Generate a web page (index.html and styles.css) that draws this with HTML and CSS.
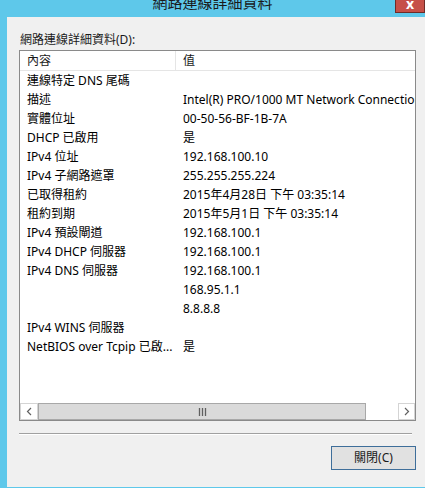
FILE: index.html
```html
<!DOCTYPE html>
<html lang="zh-Hant">
<head>
<meta charset="utf-8">
<link rel="stylesheet" href="styles.css">
</head>
<body>
<div class="window">
  <div class="titlebar">
    <div class="title">網路連線詳細資料</div>
    <div class="close">x</div>
  </div>
  <div class="content">
    <div class="label">網路連線詳細資料(D):</div>
    <div class="listbox">
      <div class="view">
        <div class="header">
          <div class="c1 h">內容</div>
          <div class="c2 h">值</div>
        </div>
        <div class="row"><div class="c1">連線特定 DNS 尾碼</div><div class="c2"></div></div>
        <div class="row"><div class="c1">描述</div><div class="c2">Intel(R) PRO/1000 MT Network Connection</div></div>
        <div class="row"><div class="c1">實體位址</div><div class="c2">00-50-56-BF-1B-7A</div></div>
        <div class="row"><div class="c1">DHCP 已啟用</div><div class="c2">是</div></div>
        <div class="row"><div class="c1">IPv4 位址</div><div class="c2">192.168.100.10</div></div>
        <div class="row"><div class="c1">IPv4 子網路遮罩</div><div class="c2">255.255.255.224</div></div>
        <div class="row"><div class="c1">已取得租約</div><div class="c2">2015年4月28日 下午 03:35:14</div></div>
        <div class="row"><div class="c1">租約到期</div><div class="c2">2015年5月1日 下午 03:35:14</div></div>
        <div class="row"><div class="c1">IPv4 預設閘道</div><div class="c2">192.168.100.1</div></div>
        <div class="row"><div class="c1">IPv4 DHCP 伺服器</div><div class="c2">192.168.100.1</div></div>
        <div class="row"><div class="c1">IPv4 DNS 伺服器</div><div class="c2">192.168.100.1</div></div>
        <div class="row"><div class="c1"></div><div class="c2">168.95.1.1</div></div>
        <div class="row"><div class="c1"></div><div class="c2">8.8.8.8</div></div>
        <div class="row"><div class="c1">IPv4 WINS 伺服器</div><div class="c2"></div></div>
        <div class="row"><div class="c1">NetBIOS over Tcpip 已啟...</div><div class="c2">是</div></div>
      </div>
      <div class="hscroll">
        <div class="arrow">
          <svg width="7" height="9" viewBox="0 0 7 9"><path d="M5 1 L1.5 4.5 L5 8" fill="none" stroke="#606060" stroke-width="1.2"/></svg>
        </div>
        <div class="thumb">
          <svg width="9" height="8" viewBox="0 0 9 8"><path d="M1.5 0V8M4.5 0V8M7.5 0V8" stroke="#606060" stroke-width="1.3"/></svg>
        </div>
        <div class="track"></div>
        <div class="arrow right">
          <svg width="7" height="9" viewBox="0 0 7 9"><path d="M2 1 L5.5 4.5 L2 8" fill="none" stroke="#606060" stroke-width="1.2"/></svg>
        </div>
      </div>
    </div>
    <div class="sep"></div>
    <div class="buttons">
      <div class="btn">關閉(C)</div>
    </div>
  </div>
</div>
</body>
</html>
```
FILE: styles.css
```css
html, body {
  margin: 0;
  padding: 0;
  background: #f0f0f0;
  overflow: hidden;
}
body {
  width: 425px;
  height: 488px;
  font-family: "Noto Sans", "Noto Sans CJK TC", sans-serif;
  font-size: 12px;
  color: #000;
}
.window {
  display: flex;
  flex-direction: column;
  height: 488px;
  background: #5ec8ea;
}
.titlebar {
  height: 17px;
  position: relative;
  display: flex;
  justify-content: center;
  overflow: hidden;
}
.title {
  font-family: "Noto Sans CJK TC", sans-serif;
  font-size: 15px;
  line-height: 15px;
  margin-top: -6px;
  color: #1a1a1a;
}
.close {
  position: absolute;
  right: 0;
  top: -1px;
  width: 28px;
  height: 12px;
  background: #c65048;
  border: 1px solid #6e2c28;
  color: #fff;
  font-weight: bold;
  font-size: 14px;
  line-height: 8px;
  text-align: center;
}
.content {
  flex: 1;
  margin-left: 7px;
  margin-bottom: 1px;
  background: #f0f0f0;
  padding: 14px 10px 0 12px;
  display: flex;
  flex-direction: column;
}
.label {
  height: 17px;
  line-height: 17px;
  font-family: "Noto Sans", "Noto Sans CJK TC", sans-serif;
  color: #1a1a1a;
  margin-left: 1px;
}
.listbox {
  margin-top: 2px;
  width: 395px;
  height: 369px;
  border: 1px solid #8a8a8a;
  background: #fff;
  display: flex;
  flex-direction: column;
}
.view {
  flex: 1;
  overflow: hidden;
}
.header {
  display: flex;
  height: 19px;
  border-bottom: 1px solid #e5e5e5;
}
.header .c1 {
  border-right: 1px solid #e5e5e5;
}
.row {
  display: flex;
  height: 19px;
}
.c1, .c2 {
  white-space: nowrap;
  overflow: hidden;
  line-height: 19px;
  box-sizing: border-box;
}
.c1 {
  width: 156px;
  flex: none;
  padding-left: 7px;
}
.c2 {
  flex: 1;
  padding-left: 7px;
  overflow: hidden;
}
.h {
  color: #1a1a1a;
}
.hscroll {
  height: 17px;
  display: flex;
  background: #fff;
}
.arrow {
  width: 16px;
  height: 15px;
  border: 1px solid #d4d4d4;
  background: #fff;
  display: flex;
  align-items: center;
  justify-content: center;
}
.thumb {
  width: 326px;
  height: 15px;
  border: 1px solid #a8a8a8;
  background: #dadada;
  display: flex;
  align-items: center;
  justify-content: center;
}
.track {
  flex: 1;
  background: #fff;
}
.arrow.right {
  width: 15px;
}
.sep {
  margin-top: 12px;
  width: 393px;
  height: 1px;
  background: #a0a0a0;
  border-bottom: 1px solid #fff;
}
.buttons {
  display: flex;
  justify-content: flex-end;
  margin-top: 11px;
  margin-right: -1px;
}
.btn {
  width: 83px;
  height: 22px;
  border: 1px solid #3e6e9a;
  background: #e1e1e1;
  line-height: 22px;
  text-align: center;
  color: #1a1a1a;
}
```
